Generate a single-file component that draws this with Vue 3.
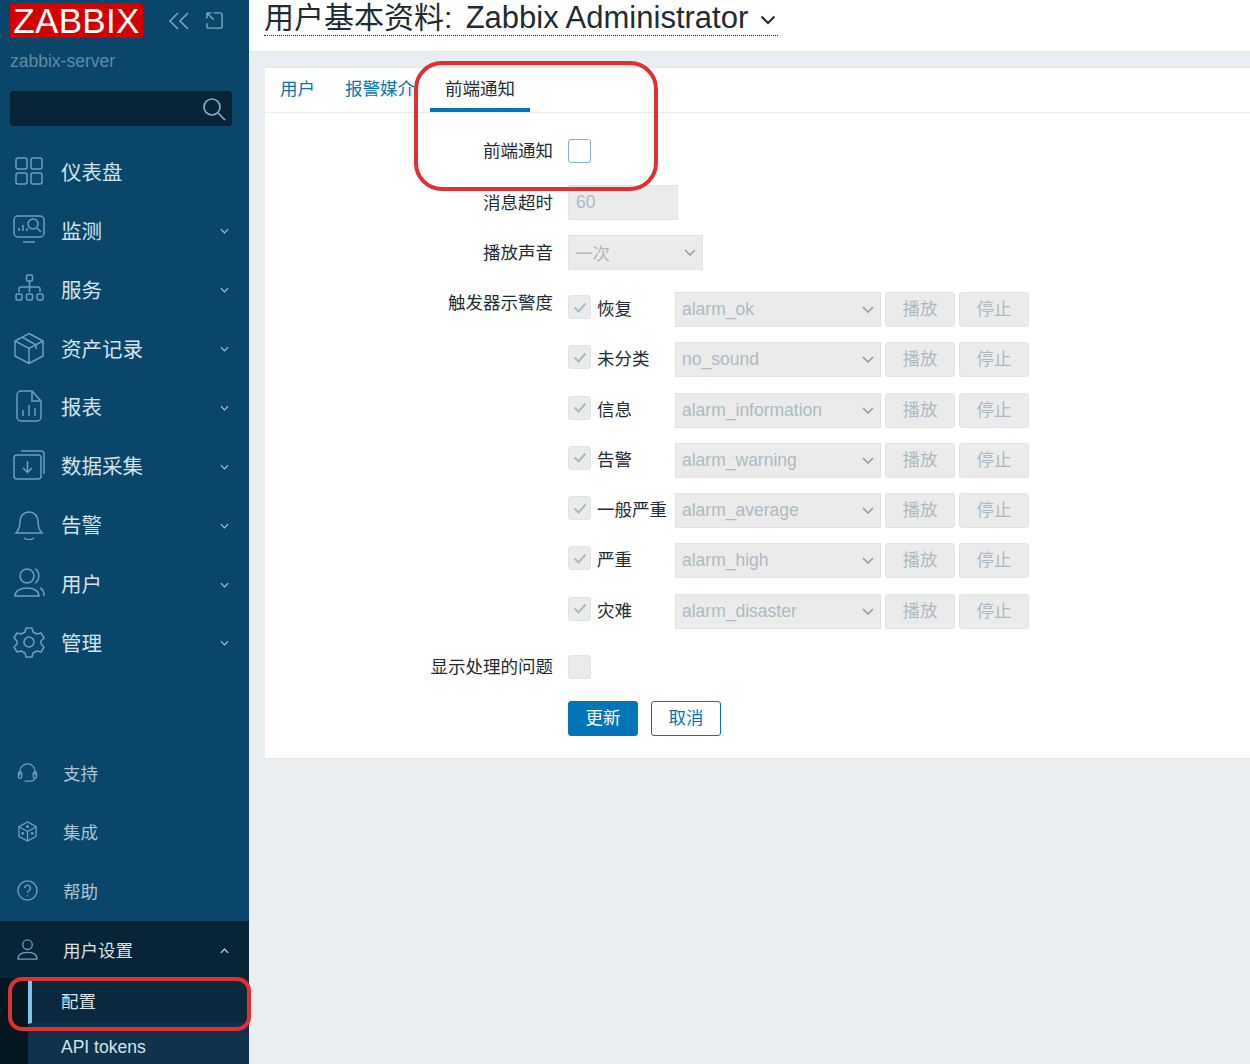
<script setup>
const mainMenu = [
  { key: 'dashboard', label: '仪表盘' },
  { key: 'monitor', label: '监测', arrow: true },
  { key: 'services', label: '服务', arrow: true },
  { key: 'inventory', label: '资产记录', arrow: true },
  { key: 'reports', label: '报表', arrow: true },
  { key: 'collect', label: '数据采集', arrow: true },
  { key: 'alerts', label: '告警', arrow: true },
  { key: 'users', label: '用户', arrow: true },
  { key: 'admin', label: '管理', arrow: true }
]

const bottomMenu = [
  { key: 'support', label: '支持' },
  { key: 'integrations', label: '集成' },
  { key: 'help', label: '帮助' }
]

const severities = [
  { label: '恢复', sound: 'alarm_ok' },
  { label: '未分类', sound: 'no_sound' },
  { label: '信息', sound: 'alarm_information' },
  { label: '告警', sound: 'alarm_warning' },
  { label: '一般严重', sound: 'alarm_average' },
  { label: '严重', sound: 'alarm_high' },
  { label: '灾难', sound: 'alarm_disaster' }
]
</script>

<template>
  <div class="page">
    <aside class="sidebar">
      <div class="brand">
        <span class="logo">ZABBIX</span>
        <svg class="brand-icon collapse" viewBox="0 0 22 18"><path d="M10 1 2 9l8 8M20 1l-8 8 8 8" /></svg>
        <svg class="brand-icon expand" viewBox="0 0 20 20"><path d="M2 8V4M9 2h7a2 2 0 0 1 2 2v12a2 2 0 0 1-2 2H4a2 2 0 0 1-2-2v-3M2 2l7 7M2 2h5M2 2v5" /></svg>
      </div>
      <div class="server">zabbix-server</div>
      <div class="search">
        <svg viewBox="0 0 24 24"><circle cx="10" cy="10" r="8" /><path d="m16 16 7 7" /></svg>
      </div>

      <nav class="menu">
        <div v-for="item in mainMenu" :key="item.key" class="menu-item">
          <svg class="menu-icon" viewBox="0 0 32 32">
            <template v-if="item.key === 'dashboard'">
              <rect x="3" y="3" width="11" height="11" rx="2" /><rect x="18" y="3" width="11" height="11" rx="2" />
              <rect x="3" y="18" width="11" height="11" rx="2" /><rect x="18" y="18" width="11" height="11" rx="2" />
            </template>
            <template v-else-if="item.key === 'monitor'">
              <rect x="1" y="2" width="30" height="21" rx="4" /><path d="M10 28h12M6 17v-3M10 17v-6M14 17v-3" />
              <circle cx="20" cy="10" r="5" /><path d="m24 14 4 4" />
            </template>
            <template v-else-if="item.key === 'services'">
              <rect x="13.500" y="2" width="6" height="6" rx="1.500" /><path d="M16.500 8v11M6 19v-3a2 2 0 0 1 2-2h17a2 2 0 0 1 2 2v3" />
              <rect x="3" y="21" width="6" height="6" rx="1.500" /><rect x="13.500" y="21" width="6" height="6" rx="1.500" /><rect x="24" y="21" width="6" height="6" rx="1.500" />
            </template>
            <template v-else-if="item.key === 'inventory'">
              <path d="M16 1.500 30 9v15l-14 7.500L2 24V9zM2 9l14 7.500L30 9M16 16.500v15M9 5l14 8v4" />
            </template>
            <template v-else-if="item.key === 'reports'">
              <path d="M8 1h11l9 10v16a4 4 0 0 1-4 4H8a4 4 0 0 1-4-4V5a4 4 0 0 1 4-4zM19 1v10h9M10 26v-6M16 26V15M22 26v-8" />
            </template>
            <template v-else-if="item.key === 'collect'">
              <rect x="1" y="6" width="27" height="24" rx="3" /><path d="M8 2h20a3 3 0 0 1 3 3v20M14.500 12v11M10 19l4.500 4.500L19 19" />
            </template>
            <template v-else-if="item.key === 'alerts'">
              <path d="M3 25c3-3 4-6 4-12a9 9 0 0 1 18 0c0 6 1 9 4 12zM11 30c3 2 7 2 10 0" />
            </template>
            <template v-else-if="item.key === 'users'">
              <circle cx="14" cy="9" r="7" /><path d="M2 29c0-5 5-8 12-8s12 3 12 8zM22 2c5 2 5 11 0 14M27 21c3 1 4 4 4 8" />
            </template>
            <template v-else>
              <circle cx="16" cy="16" r="5" />
              <path d="M13 2h6l1 4 4 2 4-1 3 5-3 3v3l3 3-3 5-4-1-4 2-1 4h-6l-1-4-4-2-4 1-3-5 3-3v-3l-3-3 3-5 4 1 4-2z" stroke-linejoin="round" />
            </template>
          </svg>
          <span class="menu-label">{{ item.label }}</span>
          <svg v-if="item.arrow" class="arrow" viewBox="0 0 10 6"><path d="m1 1 4 4 4-4" /></svg>
        </div>
      </nav>

      <nav class="menu-bottom">
        <div v-for="item in bottomMenu" :key="item.key" class="menu-item small">
          <svg class="small-icon" viewBox="0 0 22 22">
            <template v-if="item.key === 'support'">
              <path d="M3 14V10a8 8 0 0 1 16 0v4M8 20h6a5 5 0 0 0 5-4" /><rect x="1.500" y="10.500" width="3.500" height="6.500" rx="1.700" /><rect x="17" y="10.500" width="3.500" height="6.500" rx="1.700" />
            </template>
            <template v-else-if="item.key === 'integrations'">
              <path d="M11 1 20 6v10l-9 5-9-5V6zM2 6l9 5 9-5M11 11v10" /><circle cx="11" cy="6" r=".8" /><circle cx="6" cy="13" r=".8" /><circle cx="16" cy="13" r=".8" />
            </template>
            <template v-else>
              <circle cx="11" cy="11" r="10" /><path d="M8 8.500a3 3 0 1 1 4.500 2.500c-1 .6-1.500 1.200-1.500 2.500M11 16v1" />
            </template>
          </svg>
          <span class="small-label">{{ item.label }}</span>
        </div>
      </nav>

      <section class="user-settings">
        <div class="menu-item small user-row">
          <svg class="small-icon" viewBox="0 0 22 22"><circle cx="11" cy="6" r="5" /><path d="M1 21c0-5 4-7 10-7s10 2 10 7z" /></svg>
          <span class="small-label bright">用户设置</span>
          <svg class="arrow up" viewBox="0 0 10 6"><path d="m1 5 4-4 4 4" /></svg>
        </div>
        <div class="submenu">
          <div class="sub-item active">配置</div>
          <div class="sub-item">API tokens</div>
        </div>
      </section>
      <div class="callout callout-menu"></div>
    </aside>

    <main class="main">
      <header class="header">
        <h1>用户基本资料: <span class="title-name">Zabbix Administrator</span><svg viewBox="0 0 16 10"><path d="m1.500 1.500 6.500 6.500 6.500-6.500" /></svg></h1>
      </header>
      <div class="content">
        <section class="panel">
          <div class="tabs">
            <a class="tab">用户</a>
            <a class="tab">报警媒介</a>
            <a class="tab current">前端通知</a>
          </div>
          <form class="form" @submit.prevent>
            <label class="form-label first">前端通知</label>
            <div class="first"><span class="check on"></span></div>

            <label class="form-label">消息超时</label>
            <div><input class="timeout" value="60" disabled></div>

            <label class="form-label">播放声音</label>
            <div>
              <div class="select once">一次<svg viewBox="0 0 12 7"><path d="m1 1 5 5 5-5" /></svg></div>
            </div>

            <label class="form-label severity-label">触发器示警度</label>
            <div class="severities">
              <div v-for="row in severities" :key="row.label" class="severity">
                <span class="check disabled">
                  <svg viewBox="0 0 14 11"><path d="m1.500 5.500 4 4 7-8" /></svg>
                </span>
                <span class="severity-name">{{ row.label }}</span>
                <div class="select sound">{{ row.sound }}<svg viewBox="0 0 12 7"><path d="m1 1 5 5 5-5" /></svg></div>
                <button class="ghost" type="button" disabled>播放</button>
                <button class="ghost" type="button" disabled>停止</button>
              </div>
            </div>

            <label class="form-label">显示处理的问题</label>
            <div><span class="check disabled"></span></div>

            <div></div>
            <div class="actions">
              <button class="primary" type="button">更新</button>
              <button class="secondary" type="button">取消</button>
            </div>
          </form>
          <div class="callout callout-tab"></div>
        </section>
      </div>
    </main>
  </div>
</template>

<style>
html, body {
  margin: 0;
  background: #ebeef0;
}
</style>

<style scoped>
.page {
  display: flex;
  width: 1250px;
  height: 1064px;
  overflow: hidden;
  font-family: "Liberation Sans", "Noto Sans CJK SC", sans-serif;
  color: #1f2c33;
}

.sidebar {
  position: relative;
  flex: 0 0 249px;
  display: flex;
  flex-direction: column;
  height: 1064px;
  background: #0a466a;
}

.brand {
  display: flex;
  align-items: center;
  height: 35px;
  margin: 3px 0 0 10px;
}

.logo {
  width: 133px;
  height: 35px;
  background: #d40000;
  color: #fff;
  font-size: 35px;
  line-height: 35px;
  text-align: center;
  letter-spacing: .3px;
}

.brand-icon {
  fill: none;
  stroke: #7fa9c2;
  stroke-width: 1.500;
}

.collapse {
  width: 22px;
  height: 18px;
  margin-left: 25px;
}

.expand {
  width: 19px;
  height: 19px;
  margin-left: 15px;
}

.server {
  margin: 12px 0 0 10px;
  font-size: 17.500px;
  line-height: 22px;
  color: #5f8ba6;
}

.search {
  display: flex;
  align-items: center;
  justify-content: flex-end;
  box-sizing: border-box;
  width: 222px;
  height: 35px;
  margin: 19px 0 0 10px;
  padding-right: 5px;
  border: 1px solid #052134;
  border-radius: 3px;
  background: #082537;
}

.search svg {
  width: 24px;
  height: 24px;
  fill: none;
  stroke: #84aac1;
  stroke-width: 1.700;
}

.menu {
  margin-top: 15.500px;
}

.menu-item {
  display: flex;
  align-items: center;
  height: 58.875px;
}

.menu-item.small {
  height: 59px;
}

.menu-icon {
  flex: none;
  width: 32px;
  height: 32px;
  margin-left: 13px;
  fill: none;
  stroke: #6d9fbe;
  stroke-width: 1.500;
}

.menu-label {
  flex: 1;
  margin-left: 16px;
  font-size: 20.500px;
  color: #d5e2ea;
}

.arrow {
  flex: none;
  width: 9px;
  height: 6px;
  margin: 3px 20px 0 0;
  fill: none;
  stroke: #a9c4d5;
  stroke-width: 1.300;
}

.menu-bottom {
  margin-top: 71.625px;
  margin-bottom: 1px;
}

.small-icon {
  flex: none;
  width: 21px;
  height: 21px;
  margin-left: 17px;
  fill: none;
  stroke: #6d9fbe;
  stroke-width: 1.400;
}

.small-label {
  flex: 1;
  margin-left: 25px;
  font-size: 17.500px;
  color: #a9c4d5;
}

.small-label.bright {
  color: #d5e2ea;
}

.user-settings {
  flex: 1;
  background: #082537;
}

.menu-item.user-row {
  height: 57px;
}

.up {
  margin-top: 2px;
  stroke: #d5e2ea;
}

.submenu {
  height: 86px;
  overflow: hidden;
  padding-left: 28px;
  background: #04161f;
}

.sub-item {
  box-sizing: border-box;
  display: flex;
  align-items: center;
  height: 46px;
  padding-left: 33px;
  font-size: 17.500px;
  color: #d5e2ea;
  background: #10324c;
}

.sub-item.active {
  padding-left: 29px;
  border-left: 4px solid #7cc6ee;
  border-bottom: 1px solid #0e3048;
  background: #0a293e;
}

.callout {
  position: absolute;
  box-sizing: border-box;
  border: 4px solid #e03131;
  pointer-events: none;
}

.callout-menu {
  left: 8px;
  top: 977px;
  width: 243px;
  height: 54px;
  border-radius: 14px;
}

.main {
  flex: 1;
  min-width: 0;
  display: flex;
  flex-direction: column;
}

.header {
  height: 52px;
  background: #fff;
  border-bottom: 1px solid #e3e7ea;
  box-sizing: border-box;
}

.header h1 {
  display: inline-flex;
  align-items: center;
  margin: 0 0 0 15px;
  padding-bottom: 1px;
  height: 34px;
  font-size: 30px;
  line-height: 35px;
  font-weight: 400;
  color: #1f2c33;
  border-bottom: 1px dotted #1f2c33;
  white-space: pre;
}

.title-name {
  margin-left: 5px;
  font-size: 31px;
}

.header h1 svg {
  width: 16px;
  height: 10px;
  margin: 5px 2px 0 12px;
  fill: none;
  stroke: #1f2c33;
  stroke-width: 2;
}

.content {
  flex: 1;
  padding: 15px 0 0 16px;
  background: #ebeef0;
}

.panel {
  position: relative;
  height: 692px;
  box-sizing: border-box;
  background: #fff;
  border-top: 1px solid #e3e7ea;
  border-bottom: 1px solid #e3e7ea;
}

.tabs {
  display: flex;
  height: 44px;
  border-bottom: 1px solid #ebeef0;
}

.tab {
  box-sizing: border-box;
  height: 44px;
  padding: 9px 15px 0;
  font-size: 17.500px;
  line-height: 24px;
  color: #0275b8;
}

.tab.current {
  color: #1f2c33;
  border-bottom: 4px solid #0275b8;
}

.form {
  display: grid;
  grid-template-columns: 288px 1fr;
  column-gap: 15px;
  row-gap: 15px;
  align-items: center;
  padding-top: 26px;
}

.form-label {
  font-size: 17.500px;
  line-height: 24px;
  color: #1f2c33;
  text-align: right;
  white-space: nowrap;
}

.form > div {
  min-height: 24px;
}

.first {
  margin-bottom: 7px;
}

.severity-label {
  align-self: start;
  padding-top: 6px;
}

.check {
  display: flex;
  align-items: center;
  justify-content: center;
  box-sizing: border-box;
  width: 23px;
  height: 24px;
  border: 1px solid #dfe4e7;
  border-radius: 3px;
  background: #ebebeb;
}

.check.on {
  background: #fff;
  border: 1.500px solid #7fb2d4;
}

.check svg {
  width: 14px;
  height: 11px;
  fill: none;
  stroke: #a9bbc4;
  stroke-width: 2;
}

.timeout {
  display: block;
  box-sizing: border-box;
  width: 110px;
  height: 35px;
  padding: 0 7px;
  border: 1px solid #dfe4e7;
  background: #ebebeb;
  font: 17.500px "Liberation Sans", sans-serif;
  color: #acbbc2;
}

.select {
  display: flex;
  align-items: center;
  justify-content: space-between;
  box-sizing: border-box;
  height: 35px;
  padding: 0 6px;
  border: 1px solid #dfe4e7;
  background: #ebebeb;
  font-size: 17.500px;
  color: #acbbc2;
}

.select svg {
  width: 12px;
  height: 7px;
  fill: none;
  stroke: #8da3ae;
  stroke-width: 1.700;
}

.once {
  width: 135px;
}

.severities {
  display: flex;
  flex-direction: column;
  gap: 15.300px;
  margin: 7px 0 11px;
}

.severity {
  display: flex;
  align-items: center;
  height: 35px;
}

.severity .check {
  align-self: flex-start;
  margin-top: 3px;
}

.severity-name {
  width: 78px;
  margin: -1px 0 0 6px;
  font-size: 17.500px;
  line-height: 24px;
  white-space: nowrap;
}

.sound {
  width: 206px;
}

.ghost {
  box-sizing: border-box;
  width: 70px;
  height: 35px;
  margin-left: 4px;
  padding: 0 0 4px;
  border: 1px solid #dfe4e7;
  border-radius: 3px;
  background: #ebebeb;
  font: 17.500px "Liberation Sans", "Noto Sans CJK SC", sans-serif;
  color: #acbbc2;
}

.actions {
  display: flex;
  gap: 13px;
  margin-top: 7px;
}

.primary,
.secondary {
  box-sizing: border-box;
  width: 70px;
  height: 35px;
  padding: 0 0 3px;
  border-radius: 3px;
  font: 17.500px "Liberation Sans", "Noto Sans CJK SC", sans-serif;
}

.primary {
  border: 1px solid #0275b8;
  background: #0275b8;
  color: #fff;
}

.secondary {
  border: 1px solid #0275b8;
  background: #fff;
  color: #0275b8;
}

.callout-tab {
  left: 149px;
  top: -7px;
  width: 244px;
  height: 130px;
  border-radius: 28px;
}
</style>
